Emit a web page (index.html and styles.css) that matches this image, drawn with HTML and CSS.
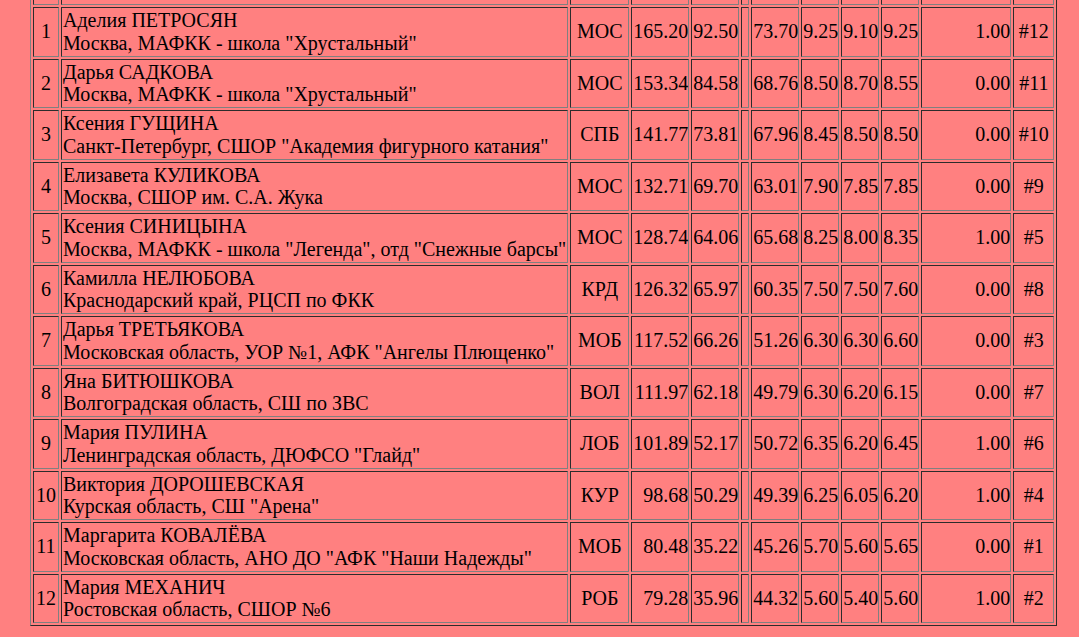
FILE: index.html
```html
<!DOCTYPE html>
<html lang="ru">
<head>
<meta charset="utf-8">
<title>Результаты</title>
<link rel="stylesheet" href="styles.css">
</head>
<body>
<table class="results">
<tr class="head"><td><div class="hcell"></div></td><td></td><td></td><td></td><td></td><td></td><td></td><td></td><td></td><td></td><td></td><td></td></tr>
<tr><td class="pl">1</td><td class="nm">Аделия ПЕТРОСЯН<br>Москва, МАФКК - школа "Хрустальный"</td><td class="rg">МОС</td><td class="n">165.20</td><td class="n">92.50</td><td class="e">&nbsp;</td><td class="n">73.70</td><td class="n">9.25</td><td class="n">9.10</td><td class="n">9.25</td><td class="n ded">1.00</td><td class="st">#12</td></tr>
<tr><td class="pl">2</td><td class="nm">Дарья САДКОВА<br>Москва, МАФКК - школа "Хрустальный"</td><td class="rg">МОС</td><td class="n">153.34</td><td class="n">84.58</td><td class="e">&nbsp;</td><td class="n">68.76</td><td class="n">8.50</td><td class="n">8.70</td><td class="n">8.55</td><td class="n ded">0.00</td><td class="st">#11</td></tr>
<tr><td class="pl">3</td><td class="nm">Ксения ГУЩИНА<br>Санкт-Петербург, СШОР "Академия фигурного катания"</td><td class="rg">СПБ</td><td class="n">141.77</td><td class="n">73.81</td><td class="e">&nbsp;</td><td class="n">67.96</td><td class="n">8.45</td><td class="n">8.50</td><td class="n">8.50</td><td class="n ded">0.00</td><td class="st">#10</td></tr>
<tr><td class="pl">4</td><td class="nm">Елизавета КУЛИКОВА<br>Москва, СШОР им. С.А. Жука</td><td class="rg">МОС</td><td class="n">132.71</td><td class="n">69.70</td><td class="e">&nbsp;</td><td class="n">63.01</td><td class="n">7.90</td><td class="n">7.85</td><td class="n">7.85</td><td class="n ded">0.00</td><td class="st">#9</td></tr>
<tr><td class="pl">5</td><td class="nm">Ксения СИНИЦЫНА<br>Москва, МАФКК - школа "Легенда", отд "Снежные барсы"</td><td class="rg">МОС</td><td class="n">128.74</td><td class="n">64.06</td><td class="e">&nbsp;</td><td class="n">65.68</td><td class="n">8.25</td><td class="n">8.00</td><td class="n">8.35</td><td class="n ded">1.00</td><td class="st">#5</td></tr>
<tr><td class="pl">6</td><td class="nm">Камилла НЕЛЮБОВА<br>Краснодарский край, РЦСП по ФКК</td><td class="rg">КРД</td><td class="n">126.32</td><td class="n">65.97</td><td class="e">&nbsp;</td><td class="n">60.35</td><td class="n">7.50</td><td class="n">7.50</td><td class="n">7.60</td><td class="n ded">0.00</td><td class="st">#8</td></tr>
<tr><td class="pl">7</td><td class="nm">Дарья ТРЕТЬЯКОВА<br>Московская область, УОР №1, АФК "Ангелы Плющенко"</td><td class="rg">МОБ</td><td class="n">117.52</td><td class="n">66.26</td><td class="e">&nbsp;</td><td class="n">51.26</td><td class="n">6.30</td><td class="n">6.30</td><td class="n">6.60</td><td class="n ded">0.00</td><td class="st">#3</td></tr>
<tr><td class="pl">8</td><td class="nm">Яна БИТЮШКОВА<br>Волгоградская область, СШ по ЗВС</td><td class="rg">ВОЛ</td><td class="n">111.97</td><td class="n">62.18</td><td class="e">&nbsp;</td><td class="n">49.79</td><td class="n">6.30</td><td class="n">6.20</td><td class="n">6.15</td><td class="n ded">0.00</td><td class="st">#7</td></tr>
<tr><td class="pl">9</td><td class="nm">Мария ПУЛИНА<br>Ленинградская область, ДЮФСО "Глайд"</td><td class="rg">ЛОБ</td><td class="n">101.89</td><td class="n">52.17</td><td class="e">&nbsp;</td><td class="n">50.72</td><td class="n">6.35</td><td class="n">6.20</td><td class="n">6.45</td><td class="n ded">1.00</td><td class="st">#6</td></tr>
<tr><td class="pl">10</td><td class="nm">Виктория ДОРОШЕВСКАЯ<br>Курская область, СШ "Арена"</td><td class="rg">КУР</td><td class="n">98.68</td><td class="n">50.29</td><td class="e">&nbsp;</td><td class="n">49.39</td><td class="n">6.25</td><td class="n">6.05</td><td class="n">6.20</td><td class="n ded">1.00</td><td class="st">#4</td></tr>
<tr><td class="pl">11</td><td class="nm">Маргарита КОВАЛЁВА<br>Московская область, АНО ДО "АФК "Наши Надежды"</td><td class="rg">МОБ</td><td class="n">80.48</td><td class="n">35.22</td><td class="e">&nbsp;</td><td class="n">45.26</td><td class="n">5.70</td><td class="n">5.60</td><td class="n">5.65</td><td class="n ded">0.00</td><td class="st">#1</td></tr>
<tr><td class="pl">12</td><td class="nm">Мария МЕХАНИЧ<br>Ростовская область, СШОР №6</td><td class="rg">РОБ</td><td class="n">79.28</td><td class="n">35.96</td><td class="e">&nbsp;</td><td class="n">44.32</td><td class="n">5.60</td><td class="n">5.40</td><td class="n">5.60</td><td class="n ded">1.00</td><td class="st">#2</td></tr>
</table>
</body>
</html>
```

FILE: styles.css
```css
html, body {
  margin: 0;
  padding: 0;
  background: #ff8080;
}

body {
  font-family: "Liberation Serif", "Times New Roman", serif;
  font-size: 20px;
  line-height: 22.75px;
  color: #000;
}

.results {
  border-collapse: separate;
  border-spacing: 2px;
  border: 1px outset gray;
  margin: -38px 0 0 30px;
  font-size: 20px;
  line-height: 22.75px;
}

.results td {
  border: 1px inset gray;
  padding: 1px;
  vertical-align: middle;
  white-space: nowrap;
}

.hcell {
  height: 36px;
}

.pl { text-align: center; width: 22px; }
.nm { text-align: left; }
.rg { text-align: center; width: 55px; }
.results td.n,
.results td.e { padding: 1px 0 1px 1px; }
.n { text-align: right; }
.e { text-align: left; }
.ded { width: 87px; }
.st { text-align: center; width: 37px; }
```
